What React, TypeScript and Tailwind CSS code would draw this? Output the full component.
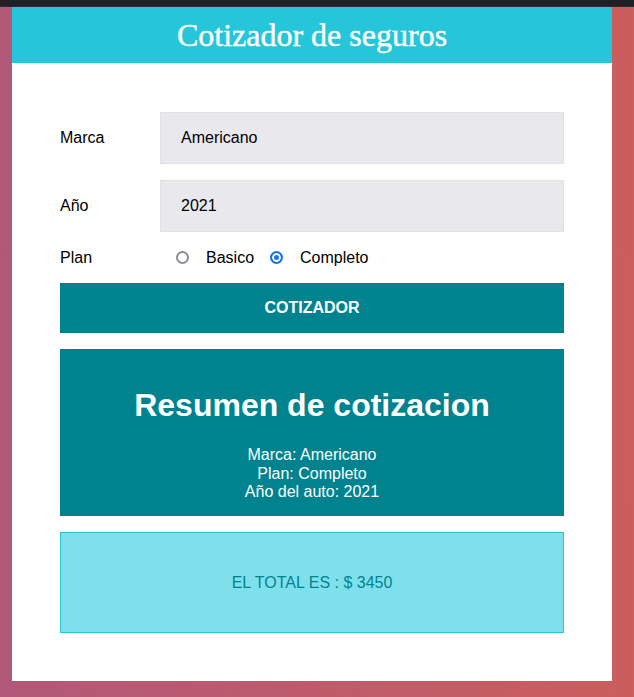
export default function App() {
  return (
    <div className="min-h-[697px] flex flex-col bg-gradient-to-r from-[#b15879] to-[#cb5d5c] font-['Liberation_Sans',Arial,sans-serif]">
      <div className="h-[7px] bg-[#202026] border-b border-[#2c2b33]" />
      <div className="mx-[12px] w-[600px] bg-white">
        <header className="h-[56px] bg-[#26c6da] flex items-center justify-center">
          <h1 className="font-['Liberation_Serif',serif] text-[32px] leading-none text-white [-webkit-text-stroke:0.4px_white]">
            Cotizador de seguros
          </h1>
        </header>

        <form className="px-12 pt-[49px] pb-[48px]">
          <Field label="Marca" value="Americano" />
          <Field label="Año" value="2021" />

          <div className="flex items-center h-[19px] mb-4 text-[16px] text-black">
            <label className="w-[100px] shrink-0">Plan</label>
            <Radio />
            <label className="ml-[17px]">Basico</label>
            <Radio checked />
            <label className="ml-[17px]">Completo</label>
          </div>

          <button
            type="button"
            className="w-full h-[50px] bg-[#00838f] text-white font-bold uppercase text-[16px]"
          >
            Cotizador
          </button>

          {/* Resumen */}
          <div className="mt-4 bg-[#00838f] text-white text-center px-4 pt-4 pb-[14px]">
            <h2 className="mt-[22px] mb-[22px] text-[32px] leading-[37px] font-bold">
              Resumen de cotizacion
            </h2>
            <p className="text-[16px] leading-[18.5px]">Marca: Americano</p>
            <p className="text-[16px] leading-[18.5px]">Plan: Completo</p>
            <p className="text-[16px] leading-[18.5px]">Año del auto: 2021</p>
          </div>

          <div className="mt-4 bg-[#7fe0ec] border border-[#26c6da] py-10 text-center">
            <p className="text-[16px] leading-[19px] text-[#00838f]">
              EL TOTAL ES : $ 3450
            </p>
          </div>
        </form>
      </div>
    </div>
  );
}

function Radio({ checked = false }: { checked?: boolean }) {
  return (
    <input
      type="radio"
      name="plan"
      defaultChecked={checked}
      className="ml-4 w-[13px] h-[13px] m-0 appearance-none rounded-full border-2 border-[#8b8b93] bg-white checked:border-[#1a73e8] checked:bg-[#1a73e8] checked:shadow-[inset_0_0_0_2px_#fff]"
    />
  );
}

function Field({ label, value }: { label: string; value: string }) {
  return (
    <div className="flex items-center mb-4 text-[16px] text-black">
      <label className="w-[100px] shrink-0">{label}</label>
      <div className="flex-1 h-[52px] bg-[#e8e8ed] border border-[#e1e1e1] flex items-center px-5">
        {value}
      </div>
    </div>
  );
}
